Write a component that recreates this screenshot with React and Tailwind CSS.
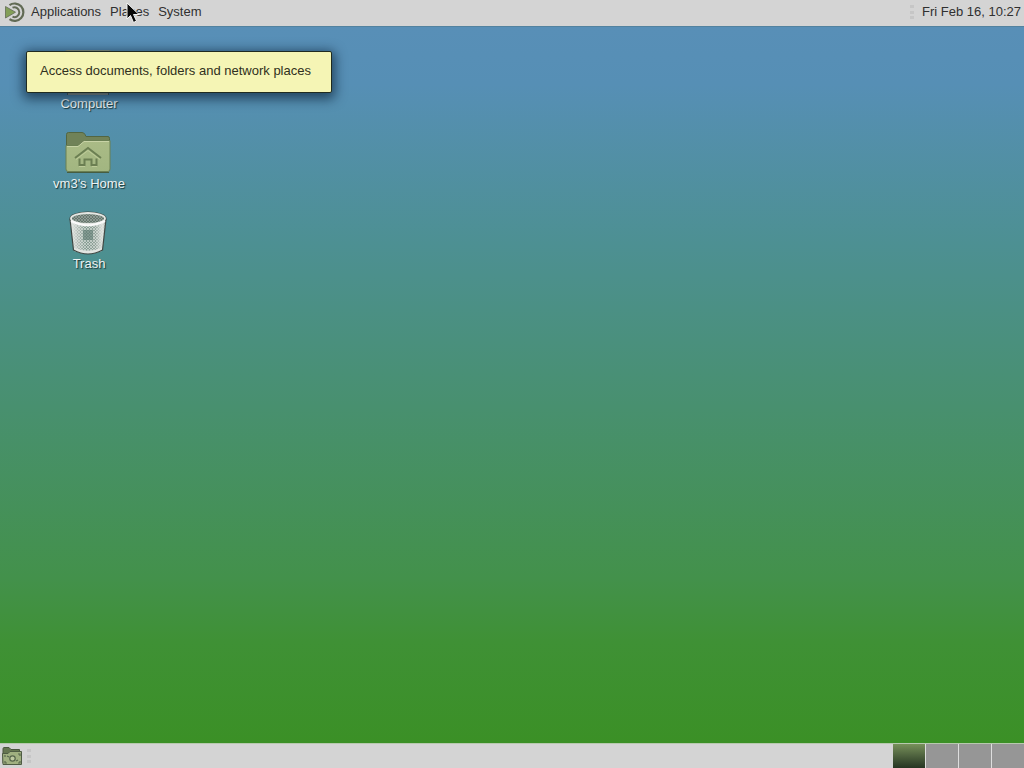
function MateLogo() {
  return (
    <svg viewBox="0 0 22 22" className="h-[22px] w-[22px] shrink-0" aria-hidden="true">
      <path d="M5.500 4.200A8.700 8.700 0 1 1 5.500 18.200" fill="none" stroke="#626b55" strokeWidth="2.200" />
      <path d="M8.500 6.700A4.900 4.900 0 1 1 8.500 15.700" fill="none" stroke="#626b55" strokeWidth="2" />
      <path d="M1.500 5.500 11.500 11.200 1.500 17Z" fill="#839f58" stroke="#626b55" strokeWidth=".8" />
    </svg>
  );
}

function Grip() {
  return (
    <svg viewBox="0 0 4 16" className="h-4 w-1 shrink-0" aria-hidden="true">
      <path d="M0 1h4v3H0ZM0 7h4v3H0ZM0 12h4v3H0Z" fill="#c6c6c6" />
    </svg>
  );
}

function ComputerIcon() {
  return (
    <svg viewBox="0 0 48 48" className="h-12 w-12" aria-hidden="true">
      <rect x="1.500" y="2.500" width="45" height="34" rx="1" fill="#78866c" stroke="#8e9b8a" />
      <rect x="4" y="5" width="40" height="28" fill="#455b46" />
      <path d="M17 36h14v7H17Z" fill="#8e967f" />
      <path d="M3 43h42v4H3Z" fill="#52635e" />
      <path d="M4 46h40" stroke="#d5dacb" />
    </svg>
  );
}

function HomeIcon() {
  return (
    <svg viewBox="0 0 48 48" className="h-12 w-12" aria-hidden="true">
      <defs>
        <linearGradient id="folder" x1="0" y1="0" x2="0" y2="1">
          <stop stopColor="#aabb86" />
          <stop offset="1" stopColor="#a2b681" />
        </linearGradient>
      </defs>
      <path d="M2.500 6.500Q2.500 4.500 4.500 4.500H18Q20 4.500 21 6.500L22 8.500H44Q45.500 8.500 45.500 10.500V21H2.500Z" fill="#708258" stroke="#536641" />
      <path d="M2 17.500H13Q15 17.500 17 15.500L19 13.500Q20 12.500 22 12.500H46V41Q46 43.500 44 43.500H4Q2 43.500 2 41Z" fill="url(#folder)" stroke="#6b8053" />
      <path d="M3 18.500H14L20 13.500H45" fill="none" stroke="#c8d3a6" />
      <path d="M11 30 24 20 37 30M15.500 30.500V37H20.500V31.500H27.500V37H32.500V30.500" fill="none" stroke="#6b7f52" strokeWidth="2" />
      <path d="M15 38.500H21M28 38.500H33M12 31.500 24 22.500 36 31.500" fill="none" stroke="#c4d19e" strokeWidth=".8" />
      <path d="M3 44.500H45" stroke="#465d40" />
    </svg>
  );
}

function TrashIcon() {
  return (
    <svg viewBox="0 0 48 48" className="h-12 w-12" aria-hidden="true">
      <defs>
        <pattern id="mesh" width="3" height="3" patternUnits="userSpaceOnUse">
          <path d="M0 0 3 3M3 0 0 3" stroke="#dfe6e1" strokeWidth=".6" />
        </pattern>
        <linearGradient id="metal">
          <stop stopColor="#f0f0ee" />
          <stop offset=".2" stopColor="#b8c0bb" />
          <stop offset=".45" stopColor="#839b91" />
          <stop offset=".7" stopColor="#94a49c" />
          <stop offset=".9" stopColor="#dcdfdc" />
          <stop offset="1" stopColor="#a5aca8" />
        </linearGradient>
      </defs>
      <path d="M6 11 9.500 42Q24 50 38.500 42L42 11Z" fill="url(#metal)" />
      <path d="M6 11 9.500 42Q24 50 38.500 42L42 11Z" fill="url(#mesh)" />
      <path d="M19 22H29V32H19Z" fill="#607d73" opacity=".65" />
      <path d="M9.500 39.500Q24 46 38.500 39.500L38 43Q24 49 10 43Z" fill="#e3e5e1" />
      <path d="M6 11 9.500 42Q24 50 38.500 42L42 11" fill="none" stroke="#3f4844" strokeWidth="1.200" />
      <ellipse cx="24" cy="10.500" rx="18.500" ry="7" fill="#3f4844" />
      <ellipse cx="24" cy="10.500" rx="17" ry="5.500" fill="#66766d" stroke="#e5e8e4" strokeWidth="1.800" />
      <ellipse cx="24" cy="10.500" rx="15.500" ry="4.500" fill="url(#mesh)" opacity=".5" />
      <path d="M7 13Q24 21.500 41 13" fill="none" stroke="#fafafa" strokeWidth="2" />
    </svg>
  );
}

function ShowDesktopIcon() {
  return (
    <svg viewBox="0 0 22 22" className="h-[22px] w-[22px]" aria-hidden="true">
      <path d="M2 18V4Q2 2.500 3 2.500H8L10 4.500H18.500V9" fill="#657650" stroke="#4a573e" />
      <path d="M1.500 8.500H7L9 6.500H20.500V19.500H2Z" fill="#a0b080" stroke="#4e5c43" />
      <path d="M4 10v2M4 16v2h2M17 9h2v2M19 16v2h-2M6 11l2 1M15 16l2-1" fill="none" stroke="#59694d" strokeWidth="1.200" />
      <circle cx="11.500" cy="13.500" r="2.700" fill="#bdc89f" stroke="#55644a" strokeWidth="1.200" />
    </svg>
  );
}

function Pointer() {
  return (
    <svg viewBox="0 0 14 22" className="pointer-events-none absolute -top-0.5 left-4 z-20 h-[22px] w-3.5" aria-hidden="true">
      <path d="M1 1V17L4.500 13.500 7.500 20.500 10.500 19 7.500 12.500H13Z" fill="#080808" stroke="#f4f4f4" strokeWidth="1" />
    </svg>
  );
}

function DesktopItem({ label, children }) {
  return (
    <button type="button" className="flex h-20 w-32 flex-col items-center">
      {children}
      <span className="pl-0.5 text-[13px] leading-4 text-[#edf3f3] [text-shadow:1px_1px_1px_#173535]">{label}</span>
    </button>
  );
}

export default function App() {
  return (
    <div className="flex min-h-screen flex-col bg-[#d4d4d4] font-['Liberation_Sans',Arial,sans-serif] text-[13px] leading-4 text-[#303030]">
      <header className="flex h-[26px] items-center justify-between pr-[3px] pb-0.5 pl-1">
        <nav className="flex items-center gap-[9px]" aria-label="Main menu">
          <button type="button" className="flex items-center gap-[5px]">
            <MateLogo />
            Applications
          </button>
          <div className="relative">
            <button type="button" className="block" aria-describedby="places-tip">Places</button>
            <Pointer />
          </div>
          <button type="button">System</button>
        </nav>
        <div className="flex items-center gap-2">
          <Grip />
          <button type="button">Fri Feb 16, 10:27</button>
        </div>
      </header>

      <main className="relative flex-1 border-t border-[#52829f] bg-[linear-gradient(to_bottom,#588fb7_0%,#568fb5_8%,#4d9093_30%,#48906f_53%,#43914b_77%,#3f9135_86%,#3b9026_100%)] pt-[21px] pl-6">
        <div className="flex flex-col items-start">
          <DesktopItem label="Computer"><ComputerIcon /></DesktopItem>
          <DesktopItem label="vm3's Home"><HomeIcon /></DesktopItem>
          <DesktopItem label="Trash"><TrashIcon /></DesktopItem>
        </div>
        <div
          id="places-tip"
          role="tooltip"
          className="absolute top-6 left-[26px] z-10 min-w-[306px] rounded-xs border border-[#202b20] bg-[#f5f5b5] px-[13px] pt-[11px] pb-[13px] whitespace-nowrap text-[#303020] shadow-[0_3px_12px_3px_rgba(0,20,40,0.6)]"
        >
          Access documents, folders and network places
        </div>
      </main>

      <footer className="flex h-[25px] items-stretch justify-between border-t border-[#b7c9ae]">
        <div className="flex items-center gap-1 pl-px">
          <button type="button" aria-label="Show desktop"><ShowDesktopIcon /></button>
          <Grip />
        </div>
        <div className="flex gap-px bg-[#dedede]">
          <button type="button" aria-label="Workspace 1" className="w-8 bg-linear-to-b from-[#78915b] to-[#263522]" />
          <button type="button" aria-label="Workspace 2" className="w-8 bg-[#969696]" />
          <button type="button" aria-label="Workspace 3" className="w-8 bg-[#969696]" />
          <button type="button" aria-label="Workspace 4" className="w-8 bg-[#969696]" />
        </div>
      </footer>
    </div>
  );
}
